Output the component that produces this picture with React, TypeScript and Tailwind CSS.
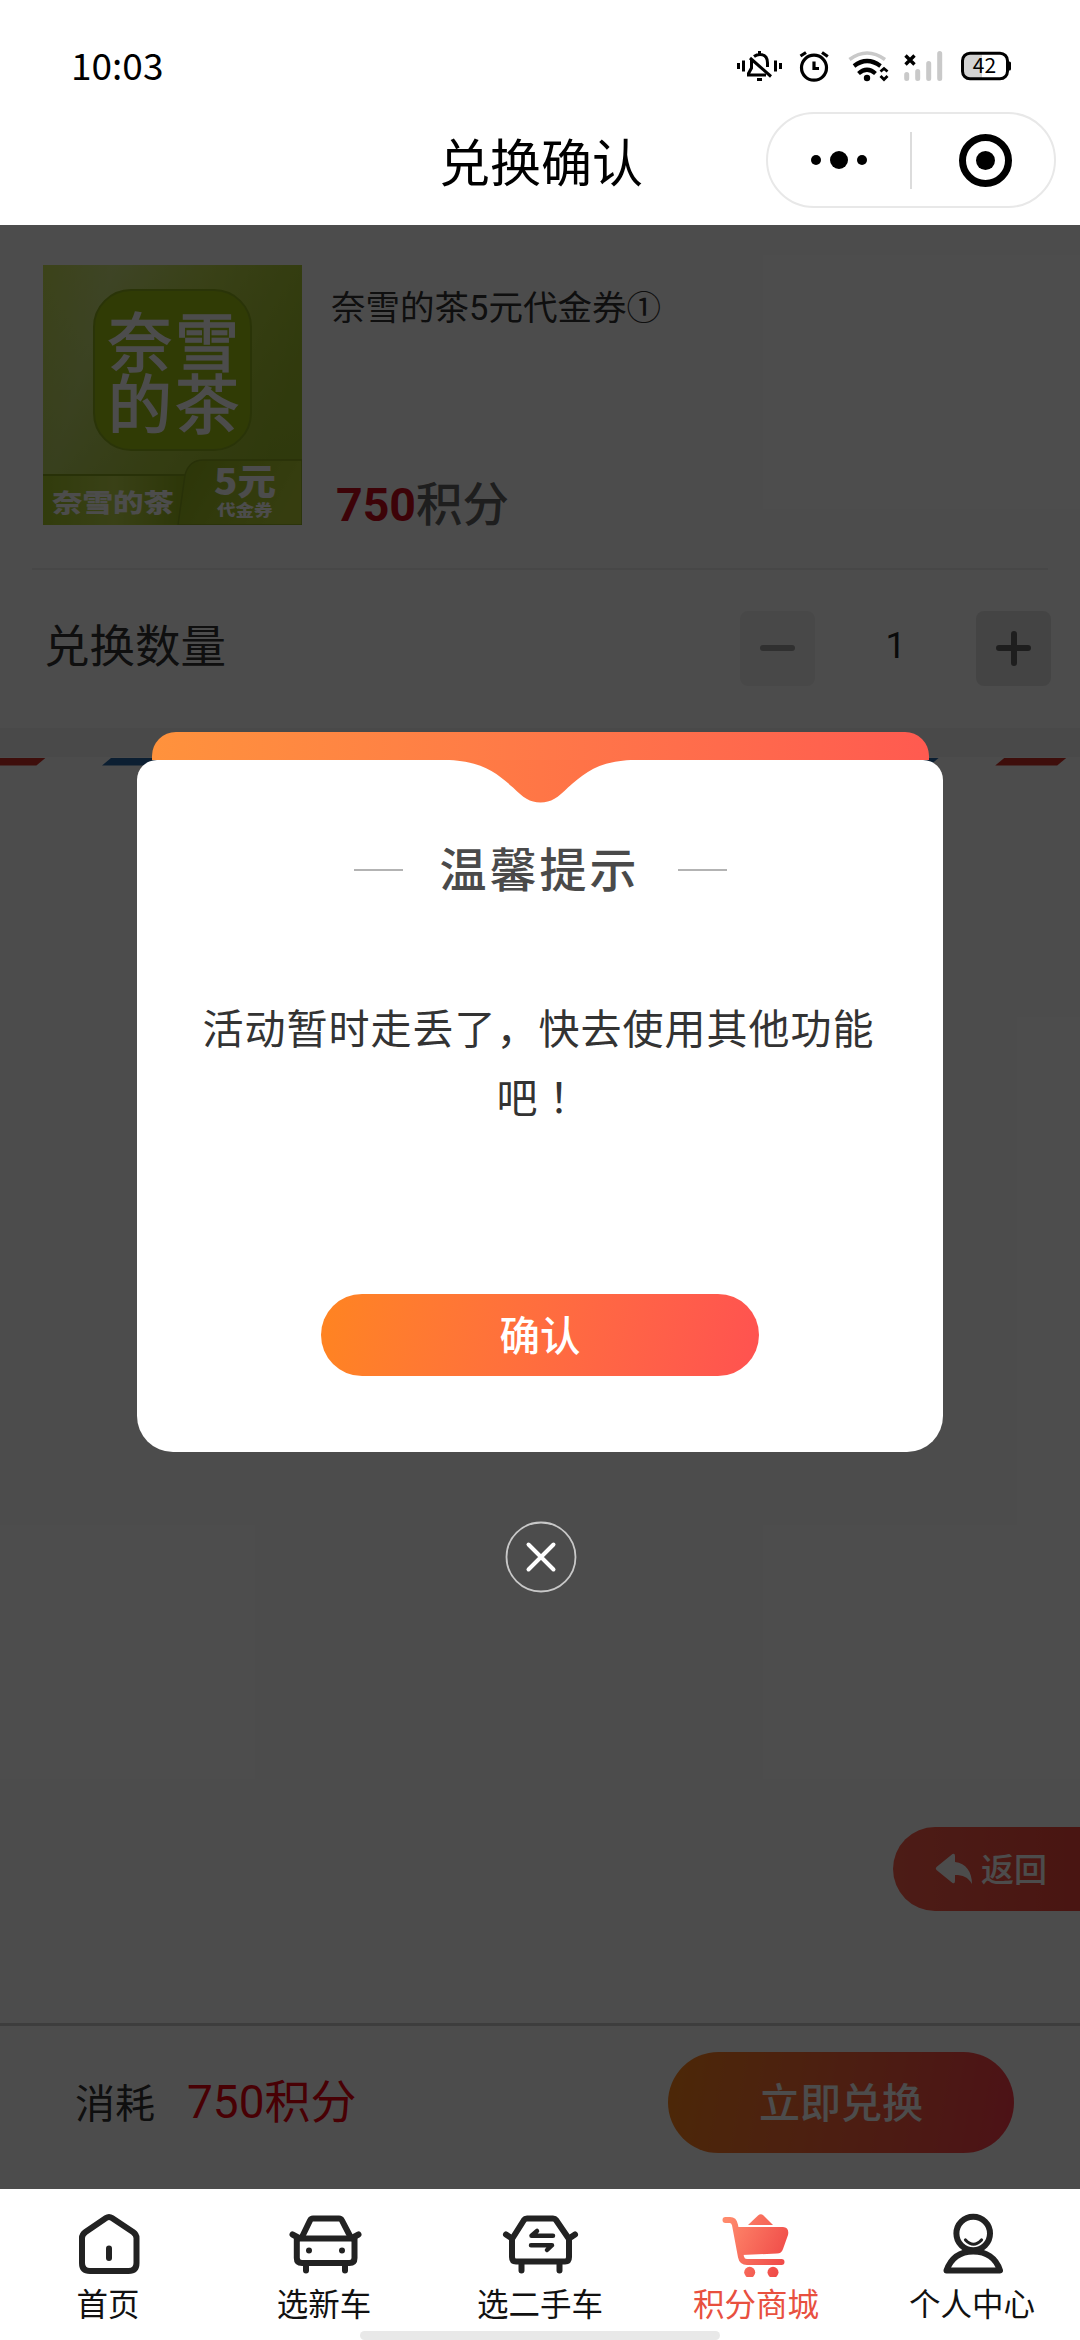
import React from "react";

const CJK = "font-['Noto_Sans_CJK_SC',sans-serif]";
const MIXED = "font-['Roboto','Noto_Sans_CJK_SC',sans-serif]";

function StatusIcons() {
  return (
    <svg className="h-[40px] w-[280px]" viewBox="736 46 280 40" fill="none" stroke="#000">
      <g strokeWidth="3">
        <path d="M738.5 63v6M743.5 60.5v11M775.5 60.5v11M780.5 63v6" />
        <path d="M759.5 51v4M754 56.500C756 55 758 54.500 760 54.500C765.500 54.500 767.500 58.500 767.500 63V67M751.500 60V68L748.500 73.500V75H766" />
        <path d="M750 58L771 76.500" />
        <path d="M757 79.500h5" />
      </g>
      <g strokeWidth="3.2">
        <circle cx="814" cy="67.700" r="12.500" />
        <path d="M814 61.500v7h5" />
        <path d="M800.500 56L806 52.500M822 52.500L827.800 56.500" />
      </g>
      <path d="M849.500 59.500Q867 46.500 885 59.500" stroke="#c9c9c9" strokeWidth="3.600" />
      <path d="M854 66Q867 56 880.500 66" strokeWidth="4.200" />
      <path d="M858.500 73.500Q867 66 875.500 73.500" strokeWidth="4.200" />
      <circle cx="867" cy="78" r="3.200" fill="#000" stroke="none" />
      <path d="M880.500 71.500L884 68.500L887.500 71.500M880.500 76L884 79.500L887.500 76" strokeWidth="2.800" />
      <g stroke="#c9c9c9" strokeWidth="5" strokeLinecap="round">
        <path d="M906.700 74.500V78.500M917.700 71.500V78.500M928.700 63.500V78.500M939.700 53.500V78.500" />
      </g>
      <path d="M905.500 55.500L914.500 64.500M914.500 55.500L905.500 64.500" strokeWidth="3.400" />
      <path d="M970 53H982V79H970Q963 79 963 72V60Q963 53 970 53Z" fill="#d2d2d2" stroke="none" />
      <rect x="962.500" y="53.200" width="45" height="25.600" rx="7.500" strokeWidth="3" />
      <path d="M1008 61.500h1.500q1.500 0 1.500 1.500v6q0 1.500-1.500 1.500H1008z" fill="#000" stroke="none" />
      <text x="984.500" y="73" fontSize="21" textAnchor="middle" fill="#000" stroke="none" fontFamily="Noto Sans CJK SC">
        42
      </text>
    </svg>
  );
}

function Header() {
  return (
    <header className="flex h-[225px] flex-col bg-white">
      <div className="flex h-[112px] items-start justify-between pt-[46px] pr-16 pl-[71px]">
        <span className={`${CJK} -mt-[2px] text-[37px] leading-[40px] text-black`}>10:03</span>
        <StatusIcons />
      </div>
      <div className="grid grid-cols-[1fr_auto_1fr] items-center pr-6">
        <span />
        <h1 className={`${CJK} w-[228px] pl-[25px] text-[51px] leading-[96px] whitespace-nowrap text-black`}>兑换确认</h1>
        <div className="flex h-[96px] w-[290px] items-center justify-self-end rounded-full border-2 border-[#e8e8e8]">
          <div className="flex w-[142px] items-center justify-center gap-[9px]">
            <i className="size-[10px] rounded-full bg-black" />
            <i className="size-[18px] rounded-full bg-black" />
            <i className="size-[10px] rounded-full bg-black" />
          </div>
          <i className="h-[57px] w-[2px] bg-[#dcdcdc]" />
          <div className="flex w-[142px] items-center justify-center pl-[5px]">
            <div className="flex size-[53px] items-center justify-center rounded-full border-[7px] border-black">
              <i className="size-[19px] rounded-full bg-black" />
            </div>
          </div>
        </div>
      </div>
    </header>
  );
}

function CouponPicture() {
  return (
    <svg className="h-[260px] w-[259px] shrink-0" viewBox="0 0 259 260" fontFamily="Noto Sans CJK SC">
      <defs>
        <linearGradient id="lime" x1="0" y1="0" x2="1" y2="0.300">
          <stop offset="0" stopColor="#d3e860" />
          <stop offset="0.250" stopColor="#e0f295" />
          <stop offset="0.600" stopColor="#d0e65c" />
          <stop offset="1" stopColor="#b4d138" />
        </linearGradient>
        <linearGradient id="limeShade" x1="0" y1="0" x2="0.400" y2="1">
          <stop offset="0" stopColor="#8cb020" stopOpacity="0.150" />
          <stop offset="1" stopColor="#8cb020" stopOpacity="0.550" />
        </linearGradient>
        <linearGradient id="tag" x1="0" y1="0" x2="1" y2="0">
          <stop offset="0" stopColor="#a6c82a" />
          <stop offset="0.500" stopColor="#c0d94c" />
          <stop offset="1" stopColor="#96b61c" />
        </linearGradient>
        <linearGradient id="tag2" x1="0" y1="0" x2="1" y2="0.300">
          <stop offset="0" stopColor="#93b51c" />
          <stop offset="1" stopColor="#b4cd34" />
        </linearGradient>
      </defs>
      <rect width="259" height="260" fill="url(#lime)" />
      <rect width="259" height="260" fill="url(#limeShade)" />
      <rect x="51" y="25" width="157" height="160" rx="37" fill="#a1c512" stroke="#8dae1c" strokeWidth="2" />
      <text fill="#fff" stroke="#fff" strokeWidth="1.500" fontSize="64" fontWeight="400">
        <tspan x="65" y="101">奈</tspan>
        <tspan x="132">雪</tspan>
        <tspan x="65" y="163">的</tspan>
        <tspan x="132">茶</tspan>
      </text>
      <path d="M0 210H142L135 260H0Z" fill="url(#tag)" />
      <path d="M0 210H142" stroke="#86a31c" strokeWidth="2" />
      <path d="M135 260L142 210Q146 195 160 195H259V260Z" fill="url(#tag2)" stroke="#86a31c" strokeWidth="1.500" />
      <g fill="#fff" fontWeight="900">
        <text transform="translate(9 247) scale(1 0.820)" fontSize="30.500">
          奈雪的茶
        </text>
        <text transform="translate(171 230) scale(1.040 0.970)" fontSize="37">
          5元
        </text>
        <text transform="translate(174 251) scale(1 0.840)" fontSize="18.500">
          代金券
        </text>
      </g>
    </svg>
  );
}

function StripeBand() {
  const parts = Array.from({ length: 9 }, (_, i) => i - 1);
  return (
    <svg className="h-[9px] w-full" viewBox="0 0 1080 9">
      {parts.map((n) => {
        const x = 111 + n * 127.6;
        return (
          <path
            key={n}
            d={`M${x} 1H${x + 62}L${x + 53} 8.500H${x - 9}Z`}
            fill={n % 2 === 0 ? "#2a6aa8" : "#d03026"}
          />
        );
      })}
    </svg>
  );
}

function Page() {
  return (
    <div className="flex h-full flex-col bg-white">
      <section className="mx-8 flex h-[345px] border-b-2 border-[#eeeeee] pt-[40px] pl-[11px]">
        <CouponPicture />
        <div className="flex flex-col pl-[29px]">
          <p className={`${MIXED} mt-[20px] text-[34.5px] leading-[46px] text-[#333]`}>奈雪的茶5元代金券①</p>
          <p className={`${MIXED} mt-[142px] pl-[5px] text-[46.5px] leading-[64px] font-medium text-[#666]`}>
            <b className="font-bold text-[#cc0a1c]">750</b>积分
          </p>
        </div>
      </section>
      <section className="flex h-[158px] items-center justify-between pr-[29px] pb-[2px] pl-[44px]">
        <span className={`${CJK} -mt-[10px] text-[45.5px] text-[#333]`}>兑换数量</span>
        <div className="flex items-center">
          <div className="flex size-[75px] items-center justify-center rounded-lg bg-[#f1f1f1]">
            <i className="h-[6px] w-[35px] rounded-full bg-[#a0a0a0]" />
          </div>
          <span className={`${MIXED} -mt-[4px] w-[161px] text-center text-[36px] text-[#222]`}>1</span>
          <div className="grid size-[75px] place-items-center rounded-lg bg-[#e4e4e4]">
            <i className="col-start-1 row-start-1 h-[6px] w-[35px] rounded-full bg-[#666]" />
            <i className="col-start-1 row-start-1 h-[35px] w-[6px] rounded-full bg-[#666]" />
          </div>
        </div>
      </section>
      <div className="h-[29px] bg-[#f4f4f4]" />
      <StripeBand />
      <div className="mt-[1061px] flex h-[84px] w-[187px] items-center self-end rounded-l-full bg-linear-to-r from-[#ff5f4c] to-[#f5473c] pl-[42px]">
        <svg className="h-[33px] w-[38px]" viewBox="0 0 38 33" fill="#fff">
          <path d="M17.500 1Q20 0 20 3V9C31 10 37 19 37 31C33 24 28 22 20 22V28Q20 31 17.500 30L1.500 17Q0 15.500 1.500 14Z" />
        </svg>
        <span className={`${CJK} ml-[8px] text-[33px] font-medium text-white`}>返回</span>
      </div>
      <section className="mt-[112px] flex flex-1 items-center border-t-[3px] border-[#cbcbcb] pr-[66px] pb-[11px] pl-[75px]">
        <span className={`${CJK} -mt-[2px] text-[40px] text-[#333]`}>消耗</span>
        <span className={`${MIXED} ml-[32px] flex-1 text-[46px] text-[#f0000f]`}>750积分</span>
        <button
          className={`${CJK} h-[101px] w-[346px] rounded-full bg-linear-100 from-[#ff8518] to-[#ff3b4c] pb-[3px] text-[41px] font-medium text-white`}
        >
          立即兑换
        </button>
      </section>
    </div>
  );
}

function Modal() {
  return (
    <div className="absolute inset-0 flex flex-col items-center bg-black/70 pt-[507px]">
      <div className="h-[28px] w-[777px] rounded-t-[24px] bg-linear-to-r from-[#ff923c] to-[#ff5a50]" />
      <div className="flex h-[692px] w-[806px] flex-col items-center rounded-t-[20px] rounded-b-[36px] bg-white">
        <svg className="h-[43px] w-[190px]" viewBox="445 759.500 190 43">
          <defs>
            <linearGradient id="notch" gradientUnits="userSpaceOnUse" x1="151" y1="0" x2="929" y2="0">
              <stop offset="0" stopColor="#ff923c" />
              <stop offset="1" stopColor="#ff5a50" />
            </linearGradient>
          </defs>
          <path
            d="M445 759.500C482 760 496 772 513 787C523 797 530 802 540.500 802C551 802 558 797 568 787C585 772 599 760 635 759.500Z"
            fill="url(#notch)"
          />
        </svg>
        <div className="mt-[32px] flex h-[70px] items-center">
          <i className="h-[2px] w-[49px] bg-[#b3b3b3]" />
          <h2 className={`${CJK} -mt-[6px] mr-[35px] ml-[37px] w-[203px] text-[47px] font-medium tracking-[3px] whitespace-nowrap text-[#4a4a4a]`}>
            温馨提示
          </h2>
          <i className="h-[2px] w-[49px] bg-[#b3b3b3]" />
        </div>
        <p className={`${CJK} mt-[87px] mr-[3px] w-[676px] text-center text-[41px] leading-[69px] tracking-[1px] text-[#333]`}>
          活动暂时走丢了，快去使用其他功能
          <br />吧<span className="font-['Noto_Sans_CJK_TC',sans-serif]">！</span>
        </p>
        <button
          className={`${CJK} mt-[164px] h-[82px] w-[438px] rounded-full bg-linear-100 from-[#ff8420] to-[#ff5250] pb-[2px] text-[40.5px] font-medium text-white`}
        >
          确认
        </button>
      </div>
      <svg className="mt-[69px] ml-[2px] size-[72px]" viewBox="0 0 72 72" fill="none" stroke="#fff" strokeLinecap="round">
        <circle cx="36" cy="36" r="34.500" stroke="#c8c8c8" strokeWidth="1.800" />
        <path d="M23.500 23.500L48.500 48.500M48.500 23.500L23.500 48.500" strokeWidth="4" />
      </svg>
    </div>
  );
}

const TABS = [
  {
    label: "首页",
    box: "0 2209 216 68",
    art: (
      <>
        <path d="M106 2218Q109 2216 112 2218L133 2232Q136.500 2234.500 136.500 2238V2263Q136.500 2271 128.500 2271H90Q82 2271 82 2263V2238Q82 2234.500 85.500 2232Z" />
        <path d="M109 2248.500V2258" />
      </>
    ),
  },
  {
    label: "选新车",
    box: "216 2209 216 68",
    art: (
      <>
        <path d="M302.500 2236L310 2220.500Q311 2218.500 313 2218.500H339Q341 2218.500 342 2220.500L350 2236" />
        <path d="M296.800 2238.500H354.500V2258Q354.500 2263 349.500 2263H302Q296.800 2263 296.800 2258Z" />
        <path d="M292.500 2234.500L299 2238M358.500 2234.500L352 2238M306 2264V2270.500M345 2264V2270.500" />
        <path d="M309 2250.400V2250.600M342 2250.400V2250.600" />
      </>
    ),
  },
  {
    label: "选二手车",
    box: "432 2209 216 68",
    art: (
      <>
        <path d="M512 2239L524 2220Q525 2218.500 527 2218.500H553Q555 2218.500 556 2220L569 2239V2257Q569 2261.500 565 2261.500H516Q512 2261.500 512 2257Z" />
        <path d="M506 2234.500L512 2238.500M575 2234.500L569 2238.500M521.500 2263V2270.500M559.500 2263V2270.500" />
        <path strokeWidth="4.500" d="M553 2235.800H531.500L537 2231M531 2245.200H552L547 2250" />
      </>
    ),
  },
  {
    label: "积分商城",
    box: "648 2209 216 68",
    active: true,
    art: (
      <g>
        <path d="M725.500 2220H730Q734 2220 735 2225L741 2257Q742 2262 747 2262H781.500" stroke="url(#cart)" />
        <g fill="url(#cart)" stroke="none">
          <path d="M736 2227H783Q789.500 2227.500 788 2235L783 2249Q781.500 2253.500 777 2253.500L742 2255Z" />
          <path d="M748 2225L758 2215.500Q760.700 2213 763.500 2215.500L773 2225Z" />
          <circle cx="749.700" cy="2272.300" r="5.500" />
          <circle cx="773" cy="2272.300" r="5.500" />
        </g>
      </g>
    ),
  },
  {
    label: "个人中心",
    box: "864 2209 216 68",
    art: (
      <>
        <circle cx="973.200" cy="2233.500" r="16.800" />
        <path d="M965.500 2240Q973.500 2248.500 981.500 2240" strokeWidth="3.200" />
        <path d="M946.500 2270.500C951 2258 960 2251.500 973.200 2251.500C986 2251.500 996 2258 1000 2270.500Z" />
      </>
    ),
  },
];

function TabBar() {
  return (
    <nav className="relative flex h-[151px] bg-white pt-[20px]">
      {TABS.map((t) => (
        <div key={t.label} className="flex w-[216px] flex-col items-center">
          <svg
            className="h-[68px] w-[216px]"
            viewBox={t.box}
            fill="none"
            stroke="#222"
            strokeWidth="6"
            strokeLinecap="round"
            strokeLinejoin="round"
          >
            <defs>
              <linearGradient id="cart" gradientUnits="userSpaceOnUse" x1="724" y1="2225" x2="786" y2="2255">
                <stop offset="0" stopColor="#ff8a6c" />
                <stop offset="1" stopColor="#f04c49" />
              </linearGradient>
            </defs>
            {t.art}
          </svg>
          <span
            className={`${CJK} mt-[3px] text-[31.5px] leading-[44px] ${t.active ? "text-[#e8503f]" : "text-[#111]"}`}
          >
            {t.label}
          </span>
        </div>
      ))}
      <i className="absolute bottom-0 left-[360px] h-[9px] w-[360px] rounded-full bg-[#e8e8e8]" />
    </nav>
  );
}

export default function App() {
  return (
    <div className="flex h-[2340px] w-[1080px] flex-col overflow-hidden bg-white">
      <Header />
      <main className="relative h-[1964px]">
        <Page />
        <Modal />
      </main>
      <TabBar />
    </div>
  );
}
